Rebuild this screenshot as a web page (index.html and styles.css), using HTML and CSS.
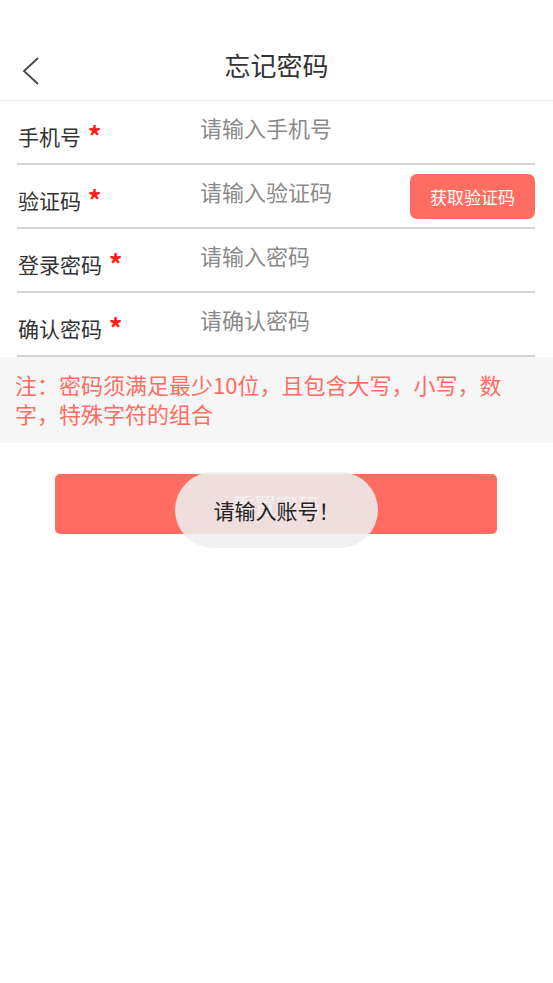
FILE: index.html
```html
<!DOCTYPE html>
<html lang="zh-CN">
<head>
<meta charset="UTF-8">
<meta name="viewport" content="width=device-width, initial-scale=1.0">
<title>忘记密码</title>
<link rel="stylesheet" href="styles.css">
</head>
<body>
<div class="page">
    <div class="header">
        <span class="back">
            <svg width="20" height="30" viewBox="0 0 20 30"><polyline points="17,2 3,15 17,28" fill="none" stroke="#444" stroke-width="1.8"/></svg>
        </span>
        <h1>忘记密码</h1>
    </div>

    <div class="form">
        <div class="row">
            <label>手机号 <span class="star">*</span></label>
            <input type="text" placeholder="请输入手机号">
        </div>
        <div class="row">
            <label>验证码 <span class="star">*</span></label>
            <input type="text" placeholder="请输入验证码">
            <button class="code-btn">获取验证码</button>
        </div>
        <div class="row">
            <label>登录密码 <span class="star">*</span></label>
            <input type="password" placeholder="请输入密码">
        </div>
        <div class="row">
            <label>确认密码 <span class="star">*</span></label>
            <input type="password" placeholder="请确认密码">
        </div>
    </div>

    <div class="note">注：密码须满足最少10位，且包含大写，小写，数字，特殊字符的组合</div>

    <div class="submit-wrap">
        <button class="submit">重置密码</button>
    </div>

    <!-- 提示框，盖在按钮上 -->
    <div class="toast">请输入账号！</div>
</div>
</body>
</html>
```

FILE: styles.css
```css
body {
    margin: 0;
    background-color: #fff;
    font-family: "Noto Sans CJK SC", "Noto Sans", sans-serif;
    color: #333;
}
.page {
    position: relative;
    width: 553px;
    height: 983px;
}
.header {
    position: relative;
    height: 60px;
    padding-top: 40px;
    border-bottom: 1px solid #eaeaea;
    display: flex;
    align-items: center;
    justify-content: center;
}
.header h1 {
    margin: 0;
    font-size: 26px;
    font-weight: normal;
    color: #333;
    line-height: 1;
    margin-top: -10px;
}
.back {
    position: absolute;
    left: 21px;
    top: 56px;
    width: 20px;
    height: 30px;
}
.form {
    padding: 0 18px 0 17px;
}
.row {
    display: flex;
    align-items: center;
    height: 62px;
    border-bottom: 2px solid #d4d4d4;
}
.row label {
    width: 182px;
    font-size: 21px;
    padding-left: 1px;
    padding-top: 7px;
    flex-shrink: 0;
}
.star {
    color: #ff1a1a;
    font-size: 27px;
    font-weight: bold;
    vertical-align: -2px;
    line-height: 1;
    margin-left: 2px;
}
.row input {
    flex: 1;
    min-width: 0;
    border: none;
    outline: none;
    font-family: inherit;
    font-size: 22px;
    color: #333;
    padding: 0;
    margin-bottom: 10px;
    background: transparent;
}
.row input::placeholder {
    color: #8a8a8a;
}
.code-btn {
    width: 125px;
    height: 45px;
    border: none;
    border-radius: 7px;
    background-color: #ff6d62;
    color: #fff;
    font-family: inherit;
    font-size: 17px;
}
.note {
    background-color: #f6f6f6;
    color: #ff6d62;
    font-size: 22px;
    line-height: 29px;
    padding: 13px 43px 15px 15px;
}
.submit-wrap {
    padding: 31px 56px 0 55px;
}
.submit {
    width: 100%;
    height: 60px;
    border: none;
    border-radius: 5px;
    background-color: #ff6d62;
    color: #fff;
    font-family: inherit;
    font-size: 22px;
}
.toast {
    position: absolute;
    left: 175px;
    top: 472px;
    width: 203px;
    height: 76px;
    border-radius: 38px;
    background-color: rgba(238, 238, 238, 0.88);
    color: #222;
    font-size: 21px;
    display: flex;
    align-items: center;
    justify-content: center;
}
```
